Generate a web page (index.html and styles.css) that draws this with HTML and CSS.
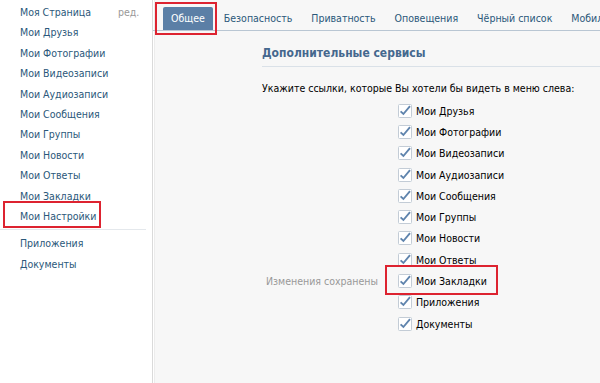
FILE: index.html
```html
<!DOCTYPE html>
<html lang="ru">
<head>
  <meta charset="UTF-8">
  <title>Мои Настройки</title>
  <link rel="stylesheet" href="styles.css">
</head>
<body>

<div class="page">
  <div class="side">
    <div class="menu">
      <a class="item" href="#">Моя Страница <span class="edit">ред.</span></a>
      <a class="item" href="#">Мои Друзья</a>
      <a class="item" href="#">Мои Фотографии</a>
      <a class="item" href="#">Мои Видеозаписи</a>
      <a class="item" href="#">Мои Аудиозаписи</a>
      <a class="item" href="#">Мои Сообщения</a>
      <a class="item" href="#">Мои Группы</a>
      <a class="item" href="#">Мои Новости</a>
      <a class="item" href="#">Мои Ответы</a>
      <a class="item" href="#">Мои Закладки</a>
      <a class="item marked" href="#">Мои Настройки</a>
    </div>
    <div class="sep"></div>
    <div class="menu">
      <a class="item" href="#">Приложения</a>
      <a class="item" href="#">Документы</a>
    </div>
  </div>

  <div class="main">
    <div class="tabs">
      <a class="tab active marked" href="#">Общее</a>
      <a class="tab" href="#">Безопасность</a>
      <a class="tab" href="#">Приватность</a>
      <a class="tab" href="#">Оповещения</a>
      <a class="tab" href="#">Чёрный список</a>
      <a class="tab" href="#">Мобильные сервисы</a>
    </div>

    <div class="content">
      <h3 class="head">Дополнительные сервисы</h3>
      <p class="hint">Укажите ссылки, которые Вы хотели бы видеть в меню слева:</p>

      <div class="form" id="form"></div>
    </div>
  </div>
</div>

<script>
  const links = [
    'Мои Друзья', 'Мои Фотографии', 'Мои Видеозаписи', 'Мои Аудиозаписи',
    'Мои Сообщения', 'Мои Группы', 'Мои Новости', 'Мои Ответы',
    'Мои Закладки', 'Приложения', 'Документы'
  ];
  const check = '<svg class="box" width="14" height="14" viewBox="0 0 14 14">' +
    '<rect x="0.5" y="0.5" width="13" height="13" rx="1" fill="#fff" stroke="#c3ccd6"/>' +
    '<path d="M2.6 7.4 L5.4 10 L12 2.2" fill="none" stroke="#5f84ad" stroke-width="1.9"/></svg>';

  const form = document.getElementById('form');
  links.forEach(function (name) {
    const row = document.createElement('div');
    row.className = 'row';
    const saved = name === 'Мои Закладки';
    row.innerHTML =
      '<span class="note">' + (saved ? 'Изменения сохранены' : '') + '</span>' +
      '<label class="check' + (saved ? ' marked' : '') + '">' + check + name + '</label>';
    form.appendChild(row);
  });
</script>

</body>
</html>
```

FILE: styles.css
```css
body {
  margin: 0;
  font-family: "DejaVu Sans", Tahoma, sans-serif;
  font-stretch: condensed;
  font-size: 10.5px;
  color: #000;
  background: #fff;
}
a {
  text-decoration: none;
  color: #2b587a;
}
.page {
  display: flex;
  height: 383px;
  overflow: hidden;
}
.side {
  width: 152px;
  padding-top: 2px;
  flex-shrink: 0;
}
.item {
  display: block;
  position: relative;
  padding-left: 20px;
  line-height: 20.4px;
}
.edit {
  position: absolute;
  left: 118px;
  color: #999;
}
.sep {
  height: 1px;
  background: #e4e8ec;
  margin: 3px 6px 3px 0;
}
.marked::after {
  content: "";
  position: absolute;
  border: 2px solid #dd2330;
}
.item.marked::after {
  left: 3px;
  top: -5px;
  width: 94px;
  height: 23px;
}
.main {
  flex: 1;
  min-width: 0;
  overflow: hidden;
  background: #f7f7f7;
  border-left: 1px solid #dadada;
  box-shadow: inset 1px 0 0 #fff, inset 2px 0 0 #ececec;
}
.tabs {
  display: flex;
  margin-top: 7px;
  padding-left: 10px;
  border-bottom: 1px solid #b9c6d3;
  white-space: nowrap;
}
.tab {
  position: relative;
  flex-shrink: 0;
  padding: 0 8px;
  margin-right: 3px;
  line-height: 23px;
  border-radius: 2px 2px 0 0;
}
.tab.active {
  background: #5b7fa6;
  color: #fff;
}
.tab.marked::after {
  left: -8px;
  top: -5px;
  width: 58px;
  height: 29px;
}
.content {
  padding: 14px 0 0 109px;
}
.head {
  margin: 0;
  font-size: 12px;
  font-weight: bold;
  color: #45688e;
  line-height: 17px;
  padding-bottom: 4px;
  border-bottom: 1px solid #dae1e8;
}
.hint {
  margin: 13px 0 4px;
  line-height: 16px;
}
.row {
  display: flex;
  align-items: center;
  height: 21.3px;
}
.note {
  width: 136px;
  padding-right: 20px;
  box-sizing: border-box;
  text-align: right;
  color: #999;
  white-space: nowrap;
}
.check {
  position: relative;
  display: flex;
  align-items: center;
  gap: 4px;
}
.check.marked::after {
  left: -13px;
  top: -9px;
  width: 109px;
  height: 26px;
}
.box {
  flex-shrink: 0;
}
```
